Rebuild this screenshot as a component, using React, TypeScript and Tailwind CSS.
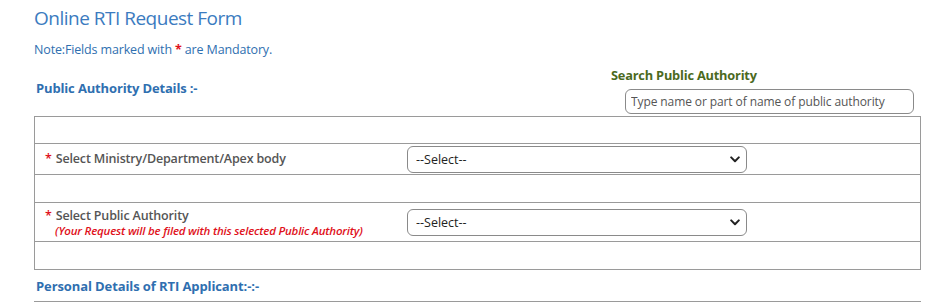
import React from "react";

const font = { fontFamily: '"Open Sans", "Noto Sans", sans-serif' };

function Chevron() {
  return (
    <svg width="10" height="7" viewBox="0 0 10 7" className="pointer-events-none absolute right-[7px] top-[10px]">
      <path d="M1.2 1.4 L5 5.2 L8.8 1.4" fill="none" stroke="#222" strokeWidth="2" strokeLinecap="round" strokeLinejoin="round" />
    </svg>
  );
}

function SelectBox() {
  return (
    <div className="relative w-[340px] h-[27px]">
      <select
        className="appearance-none w-full h-full rounded-[6px] border border-[#8a8a8a] bg-white pl-[8px] text-[12.5px] text-[#222] outline-none"
        style={font}
        defaultValue=""
      >
        <option value="">--Select--</option>
      </select>
      <Chevron />
    </div>
  );
}

function Star() {
  return <span className="text-[#e0111b] mr-[4px]">*</span>;
}

export default function App() {
  return (
    <div className="w-[941px] h-[303px] overflow-hidden bg-white" style={font}>
      <div className="pl-[34px] pr-[20px]">
        <h1 className="pt-[5px] text-[19px] leading-[26px] text-[#3b7bbf] tracking-[-0.5px]">Online RTI Request Form</h1>
        <p className="mt-[11px] text-[12.5px] leading-[16px] text-[#2f6fb0] tracking-[-0.15px]">
          Note:Fields marked with <span className="text-[#e0111b] font-bold">*</span> are Mandatory.
        </p>
        <div className="flex justify-between mt-[9px]">
          <div className="pt-[13px] pl-[2px] text-[13px] leading-[16px] font-bold text-[#2f6fb0] tracking-[-0.15px]">
            Public Authority Details :-
          </div>
          <div className="flex flex-col w-[310px] pr-[7px]">
            <div className="text-[12.8px] leading-[16px] font-bold text-[#4b6a1e] tracking-[-0.2px]">Search Public Authority</div>
            <input
              className="mt-[6px] ml-[14px] h-[25px] shrink-0 w-[289px] rounded-[6px] border border-[#8a8a8a] px-[5px] text-[12px] text-[#333] placeholder:text-[#555] outline-none tracking-[-0.1px]"
              style={font}
              placeholder="Type name or part of name of public authority"
            />
          </div>
        </div>
        <div className="mt-[2px] border border-[#9a9a9a] w-[887px]">
          <div className="h-[27px] border-b border-[#9a9a9a]" />
          <div className="h-[31px] border-b border-[#9a9a9a] flex items-center">
            <div className="w-[372px] pl-[10px] text-[12.5px] font-semibold text-[#555] tracking-[-0.15px]">
              <Star />Select Ministry/Department/Apex body
            </div>
            <SelectBox />
          </div>
          <div className="h-[28px] border-b border-[#9a9a9a]" />
          <div className="h-[39px] border-b border-[#9a9a9a] flex items-center">
            <div className="w-[372px] pl-[10px] pt-[1px]">
              <div className="text-[12.5px] leading-[16px] font-semibold text-[#555] tracking-[-0.15px]">
                <Star />Select Public Authority
              </div>
              <div className="pl-[10px] text-[11.5px] leading-[14px] italic font-semibold text-[#e0111b] tracking-[-0.2px]">
                (Your Request will be filed with this selected Public Authority)
              </div>
            </div>
            <SelectBox />
          </div>
          <div className="h-[27px]" />
        </div>
        <div className="w-[887px] h-[32px] border-b border-[#9a9a9a] pt-[8px] pl-[2px] text-[13px] leading-[16px] font-bold text-[#2f6fb0] tracking-[-0.1px]">
          Personal Details of RTI Applicant:-:-
        </div>
      </div>
    </div>
  );
}
